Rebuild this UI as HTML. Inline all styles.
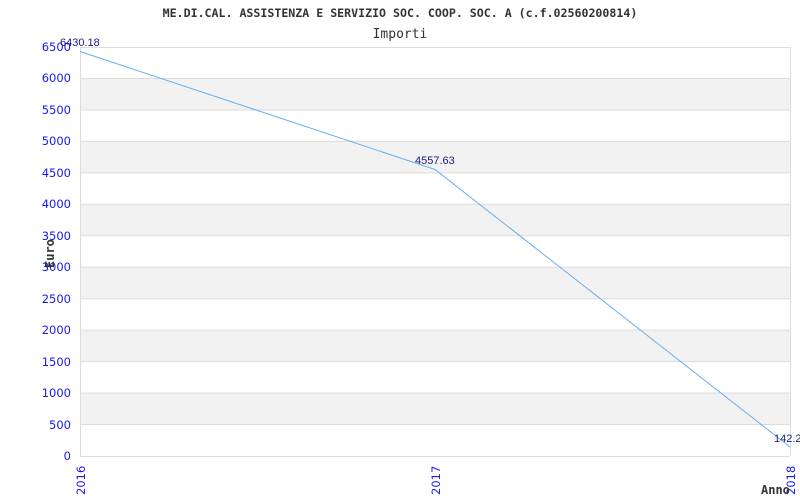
<!DOCTYPE html>
<html><head><meta charset="utf-8"><style>html,body{margin:0;padding:0;background:#fff;width:800px;height:500px;overflow:hidden}</style></head>
<body>
<svg width="800" height="500" xmlns="http://www.w3.org/2000/svg" font-family="'DejaVu Sans','Liberation Sans',sans-serif">
<rect width="800" height="500" fill="#fff"/>
<g fill="#f2f2f2">
<rect x="80" y="78.5" width="710" height="31.5"/>
<rect x="80" y="141.4" width="710" height="31.5"/>
<rect x="80" y="204.3" width="710" height="31.5"/>
<rect x="80" y="267.2" width="710" height="31.5"/>
<rect x="80" y="330.1" width="710" height="31.5"/>
<rect x="80" y="393" width="710" height="31.5"/>
</g>
<g stroke="#dcdcdc" stroke-width="1">
<line x1="80" y1="47.5" x2="790" y2="47.5"/>
<line x1="80" y1="78.5" x2="790" y2="78.5"/>
<line x1="80" y1="110" x2="790" y2="110"/>
<line x1="80" y1="141.4" x2="790" y2="141.4"/>
<line x1="80" y1="172.9" x2="790" y2="172.9"/>
<line x1="80" y1="204.3" x2="790" y2="204.3"/>
<line x1="80" y1="235.8" x2="790" y2="235.8"/>
<line x1="80" y1="267.2" x2="790" y2="267.2"/>
<line x1="80" y1="298.7" x2="790" y2="298.7"/>
<line x1="80" y1="330.1" x2="790" y2="330.1"/>
<line x1="80" y1="361.6" x2="790" y2="361.6"/>
<line x1="80" y1="393" x2="790" y2="393"/>
<line x1="80" y1="424.5" x2="790" y2="424.5"/>
<line x1="80.5" y1="47" x2="80.5" y2="456"/>
<line x1="790.5" y1="47" x2="790.5" y2="456"/>
<line x1="80" y1="456.5" x2="790" y2="456.5"/>
</g>
<polyline points="80,51.5 435,169.5 790,447" fill="none" stroke="#6aaef0" stroke-width="1"/>
<text x="400" y="17" text-anchor="middle" font-family="'DejaVu Sans Mono','Liberation Mono',monospace" font-size="11.6" font-weight="bold" fill="#333">ME.DI.CAL. ASSISTENZA E SERVIZIO SOC. COOP. SOC. A (c.f.02560200814)</text>
<text x="400" y="38" text-anchor="middle" font-family="'DejaVu Sans Mono','Liberation Mono',monospace" font-size="13" fill="#333">Importi</text>
<g fill="#1a1aee" font-size="11.5" text-anchor="end">
<text x="71" y="51">6500</text><text x="71" y="82">6000</text><text x="71" y="114">5500</text>
<text x="71" y="145">5000</text><text x="71" y="177">4500</text><text x="71" y="208">4000</text>
<text x="71" y="240">3500</text><text x="71" y="271">3000</text><text x="71" y="303">2500</text>
<text x="71" y="334">2000</text><text x="71" y="366">1500</text><text x="71" y="397">1000</text>
<text x="71" y="429">500</text><text x="71" y="460">0</text>
</g>
<g fill="#1a1aee" font-size="11.5">
<text transform="translate(85,495) rotate(-90)">2016</text>
<text transform="translate(440,495) rotate(-90)">2017</text>
<text transform="translate(795,495) rotate(-90)">2018</text>
</g>
<g fill="#1a1a80" font-size="11" font-family="'Liberation Sans',sans-serif">
<text x="60" y="46">6430.18</text>
<text x="415" y="164">4557.63</text>
<text x="774" y="442">142.2</text>
</g>
<text transform="translate(54,268) rotate(-90)" font-family="'DejaVu Sans Mono','Liberation Mono',monospace" font-size="12" font-weight="bold" fill="#333">Euro</text>
<text x="761" y="494" font-family="'DejaVu Sans Mono','Liberation Mono',monospace" font-size="12" font-weight="bold" fill="#333">Anno</text>
</svg>
</body></html>
